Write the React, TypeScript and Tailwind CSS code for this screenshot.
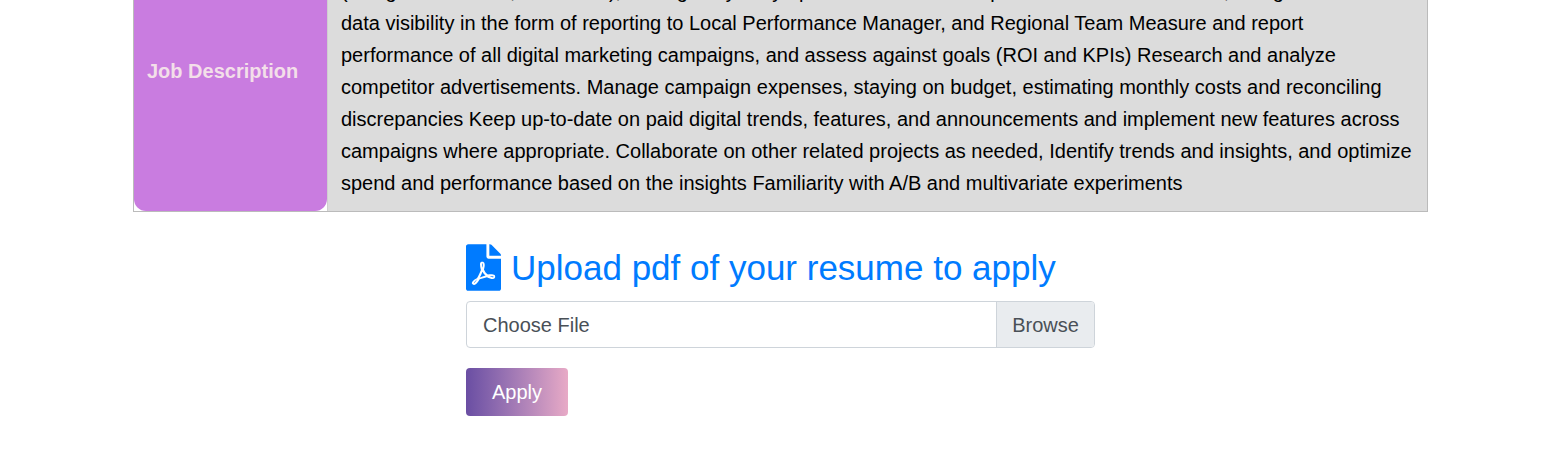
const lines = [
  '(Google Search Ad, Facebook), manage key daily optimization across all paid media and audiences, along',
  'data visibility in the form of reporting to Local Performance Manager, and Regional Team Measure and report',
  'performance of all digital marketing campaigns, and assess against goals (ROI and KPIs) Research and analyze',
  'competitor advertisements. Manage campaign expenses, staying on budget, estimating monthly costs and reconciling',
  'discrepancies Keep up-to-date on paid digital trends, features, and announcements and implement new features across',
  'campaigns where appropriate. Collaborate on other related projects as needed, Identify trends and insights, and optimize',
  'spend and performance based on the insights Familiarity with A/B and multivariate experiments',
];

function PdfIcon() {
  return (
    <svg viewBox="0 0 384 512" className="h-[47px] w-[35px] shrink-0 fill-[#007bff]">
      <path d="M181.9 256.1c-5-16-4.9-46.9-2-46.9 8.4 0 7.6 36.9 2 46.9zm-1.7 47.2c-7.7 20.2-17.3 43.3-28.4 62.7 18.3-7 39-17.2 62.9-21.9-12.7-9.6-24.9-23.4-34.5-40.8zM86.1 428.1c0 .8 13.2-5.4 34.9-40.2-6.7 6.3-29.1 24.5-34.9 40.2zM248 160h136v328c0 13.3-10.7 24-24 24H24c-13.3 0-24-10.7-24-24V24C0 10.7 10.7 0 24 0h200v136c0 13.2 10.8 24 24 24zm-8 171.8c-20-12.2-33.3-29-42.7-53.8 4.5-18.5 11.6-46.6 6.2-64.2-4.7-29.4-42.4-26.5-47.8-6.8-5 18.3-.4 44.1 8.1 77-11.6 27.6-28.7 64.6-40.8 85.8-.1 0-.1.1-.2.1-27.1 13.9-73.6 44.5-54.5 68 5.6 6.9 16 10 21.5 10 17.9 0 35.7-18 61.1-61.8 25.8-8.5 54.1-19.1 79-23.2 21.7 11.8 47.1 19.5 64 19.5 29.2 0 31.2-32 19.7-43.4-13.9-13.6-54.3-9.7-73.6-7.2zM377 105L279 7c-4.5-4.5-10.6-7-17-7h-6v128h128v-6.1c0-6.3-2.5-12.4-7-16.9zm-74.1 255.3c4.1-2.7-2.5-11.9-42.8-9 37.1 15.8 42.8 9 42.8 9z" />
    </svg>
  );
}

export default function App() {
  return (
    <div className="h-[457px] overflow-hidden bg-white font-['Liberation_Sans',Arial,sans-serif]">
      {/* table is scrolled past its top in the reference */}
      <div className="ml-[133px] mr-[135px] mt-[-25px] flex border-b border-l border-r border-[#bbbbbb]">
        <div className="flex w-[193px] shrink-0 items-center rounded-b-[12px] bg-[#c97ce0] pb-[44px] pl-[13px] text-[20px] font-bold text-[#f3dfe9]">
          Job Description
        </div>
        <div className="flex-1 border-l border-[#cfcfcf] bg-[#dcdcdc] pb-[12px] pl-[13px] text-[20px] leading-[32px] text-black">
          {lines.map((line) => (
            <div key={line} className="whitespace-nowrap">{line}</div>
          ))}
        </div>
      </div>

      <div className="ml-[466px] mt-[32px] w-[629px]">
        <div className="flex items-center gap-[10px]">
          <PdfIcon />
          <h3 className="text-[35px] leading-[47px] text-[#007bff]">Upload pdf of your resume to apply</h3>
        </div>
        <div className="mt-[10px] flex h-[47px] rounded-[4px] border border-[#ced4da] text-[20px] text-[#495057]">
          <div className="flex flex-1 items-center pl-[16px]">Choose File</div>
          <div className="flex w-[98px] items-center justify-center rounded-r-[3px] border-l border-[#ced4da] bg-[#e9ecef]">Browse</div>
        </div>
        <button className="mt-[20px] flex h-[48px] w-[102px] items-center justify-center rounded-[4px] bg-gradient-to-r from-[#6a4ea3] to-[#e8aac6] text-[20px] text-white">
          Apply
        </button>
      </div>
    </div>
  );
}
